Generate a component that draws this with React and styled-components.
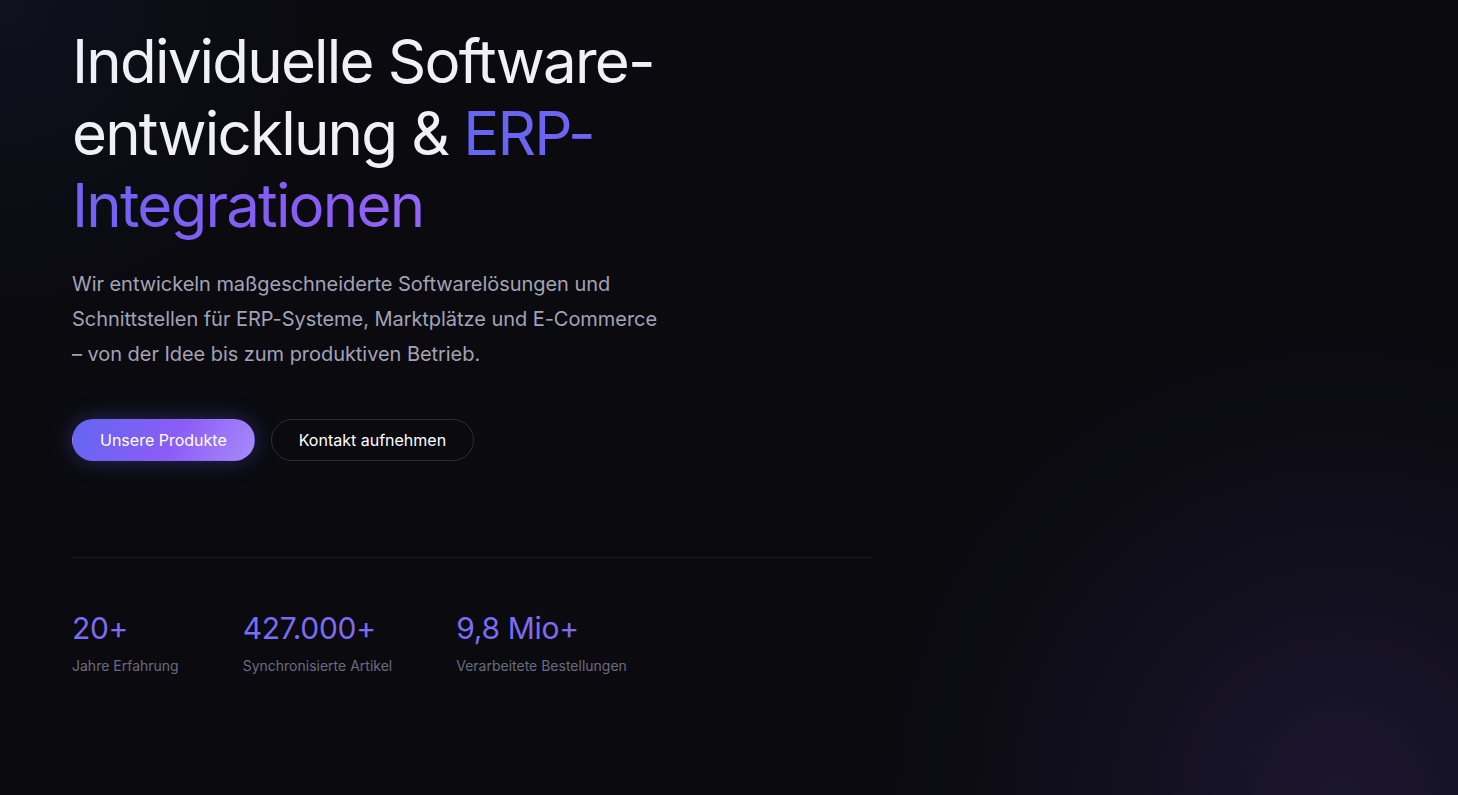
import React from "react";
import styled, { createGlobalStyle } from "styled-components";

const GlobalStyle = createGlobalStyle`
  html,
  body {
    margin: 0;
    padding: 0;
    background: #0a0a0f;
  }

  body {
    font-family: Inter, "Noto Sans", "Liberation Sans", sans-serif;
    -webkit-font-smoothing: antialiased;
  }

  * {
    box-sizing: border-box;
  }
`;

// Hero
const Hero = styled.section`
  min-height: 795px;
  padding: 25px 72px 0;
  background-color: #0a0a0f;
  background-image:
    radial-gradient(circle at 92% 100%, rgba(124, 88, 230, 0.15) 0, rgba(124, 88, 230, 0.07) 220px, transparent 460px),
    radial-gradient(circle at 0 0, rgba(99, 102, 241, 0.07) 0, transparent 320px);
  overflow: hidden;
`;

const Content = styled.div`
  max-width: 800px;
`;

const Title = styled.h1`
  margin: 0;
  max-width: 720px;
  font-size: 60px;
  font-weight: 400;
  line-height: 72px;
  letter-spacing: -1.8px;
  color: #f1f0f6;
`;

const Accent = styled.span`
  background: linear-gradient(90deg, #6366f1 0%, #8b5cf6 80%, #9466f7 100%);
  -webkit-background-clip: text;
  background-clip: text;
  color: transparent;
`;

const Lead = styled.p`
  margin: 26px 0 0;
  max-width: 600px;
  font-size: 20px;
  line-height: 35px;
  letter-spacing: -0.05px;
  color: #a3a2b6;
`;

const Actions = styled.div`
  display: flex;
  gap: 16px;
  margin-top: 47px;
`;

const Button = styled.a`
  display: inline-flex;
  align-items: center;
  height: 42px;
  padding: 0 27px;
  border-radius: 999px;
  font-size: 16px;
  font-weight: 400;
  color: #ffffff;
  text-decoration: none;
  cursor: pointer;
  border: 1px solid ${(p) => (p.$primary ? "transparent" : "rgba(255, 255, 255, 0.14)")};
  background: ${(p) =>
    p.$primary ? "linear-gradient(120deg, #6366f1 0%, #8b5cf6 55%, #a78bfa 100%)" : "transparent"};
  box-shadow: ${(p) => (p.$primary ? "0 0 24px rgba(99, 102, 241, 0.35)" : "none")};
`;

const Stats = styled.div`
  display: flex;
  gap: 64px;
  margin-top: 96px;
  padding-top: 52px;
  border-top: 1px solid rgba(255, 255, 255, 0.08);
`;

const Stat = styled.div`
  display: flex;
  flex-direction: column;
`;

const StatValue = styled.span`
  font-size: 30px;
  font-weight: 400;
  line-height: 36px;
  letter-spacing: -0.3px;
  color: #7b6cf3;
`;

const StatLabel = styled.span`
  margin-top: 9px;
  font-size: 14px;
  line-height: 22px;
  color: #6b6b82;
`;

const stats = [
  { value: "20+", label: "Jahre Erfahrung" },
  { value: "427.000+", label: "Synchronisierte Artikel" },
  { value: "9,8 Mio+", label: "Verarbeitete Bestellungen" },
];

export default function App() {
  return (
    <>
      <GlobalStyle />
      <Hero>
        <Content>
          <Title>
            Individuelle Software-entwicklung &amp; <Accent>ERP-Integrationen</Accent>
          </Title>
          <Lead>
            Wir entwickeln maßgeschneiderte Softwarelösungen und Schnittstellen für
            ERP-Systeme, Marktplätze und E-Commerce – von der Idee bis zum produktiven
            Betrieb.
          </Lead>
          <Actions>
            <Button $primary>Unsere Produkte</Button>
            <Button>Kontakt aufnehmen</Button>
          </Actions>
          <Stats>
            {stats.map((s) => (
              <Stat key={s.label}>
                <StatValue>{s.value}</StatValue>
                <StatLabel>{s.label}</StatLabel>
              </Stat>
            ))}
          </Stats>
        </Content>
      </Hero>
    </>
  );
}
